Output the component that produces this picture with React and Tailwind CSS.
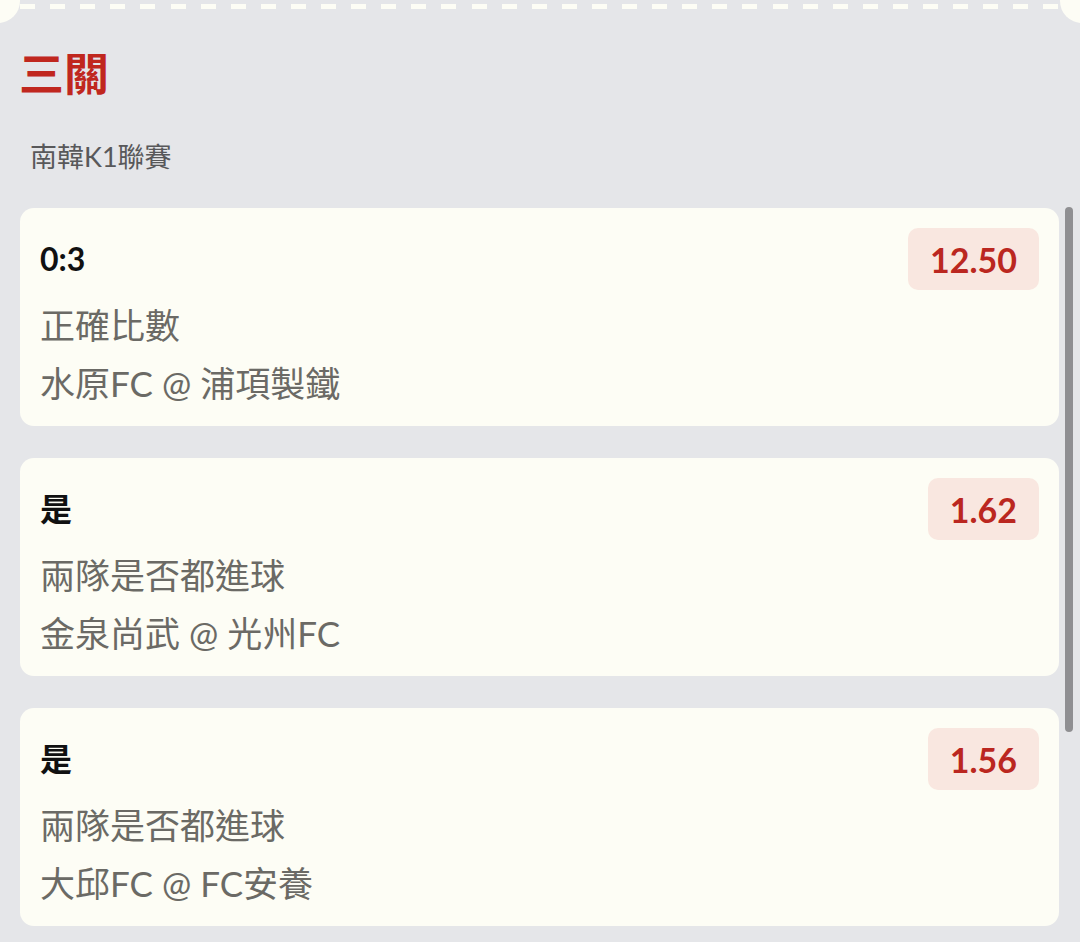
import React from 'react';

// Sélections du pari combiné
const picks = [
    { pick: "0:3", market: "正確比數", match: "水原FC @ 浦項製鐵", odds: "12.50" },
    { pick: "是", market: "兩隊是否都進球", match: "金泉尚武 @ 光州FC", odds: "1.62" },
    { pick: "是", market: "兩隊是否都進球", match: "大邱FC @ FC安養", odds: "1.56" },
];

const font = "font-['Lato','Noto_Sans_CJK_TC',sans-serif]";

function App() {
    return (
        <div className={`relative w-full min-h-screen overflow-hidden bg-[#e5e6e9] ${font}`}>
            {/* encoches du ticket */}
            <div className="absolute left-[-24px] top-[-21px] w-[44px] h-[44px] rounded-full bg-[#fdfdf5]" />
            <div className="absolute right-[-24px] top-[-21px] w-[44px] h-[44px] rounded-full bg-[#fdfdf5]" />
            <div className="h-[5px] mt-[4px] mx-[20px] bg-[repeating-linear-gradient(90deg,#fdfdf5_0_15px,transparent_15px_30.1px)]" />

            <h1 className="pt-[42px] pl-[19px] text-[45px] leading-[46px] font-bold text-[#c0271e]">
                三關
            </h1>
            <p className="mt-[45px] pl-[30px] text-[27px] leading-[30px] text-[#58585a]">
                南韓K1聯賽
            </p>

            <div className="mt-[36px] ml-[20px] mr-[21px] flex flex-col gap-8 pb-10">
                {picks.map((item, i) => (
                    <div key={i} className="rounded-[14px] bg-[#fdfdf5] pt-5 pl-[20px] pr-5 pb-[14px]">
                        <div className="flex items-center justify-between h-[62px]">
                            <span className="text-[32px] font-bold text-[#111]">{item.pick}</span>
                            <span className="h-[62px] px-[22px] flex items-center rounded-[10px] bg-[#f9e7e0] text-[34px] font-bold text-[#bb2720]">
                                {item.odds}
                            </span>
                        </div>
                        <p className="mt-[6px] text-[35px] leading-[58px] text-[#6b6a65]">{item.market}</p>
                        <p className="text-[35px] leading-[58px] text-[#6b6a65]">{item.match}</p>
                    </div>
                ))}
            </div>

            {/* barre de défilement */}
            <div className="absolute left-[1065px] top-[207px] w-[8px] h-[525px] rounded-full bg-[#8f8f92]" />
        </div>
    );
}

export default App;
